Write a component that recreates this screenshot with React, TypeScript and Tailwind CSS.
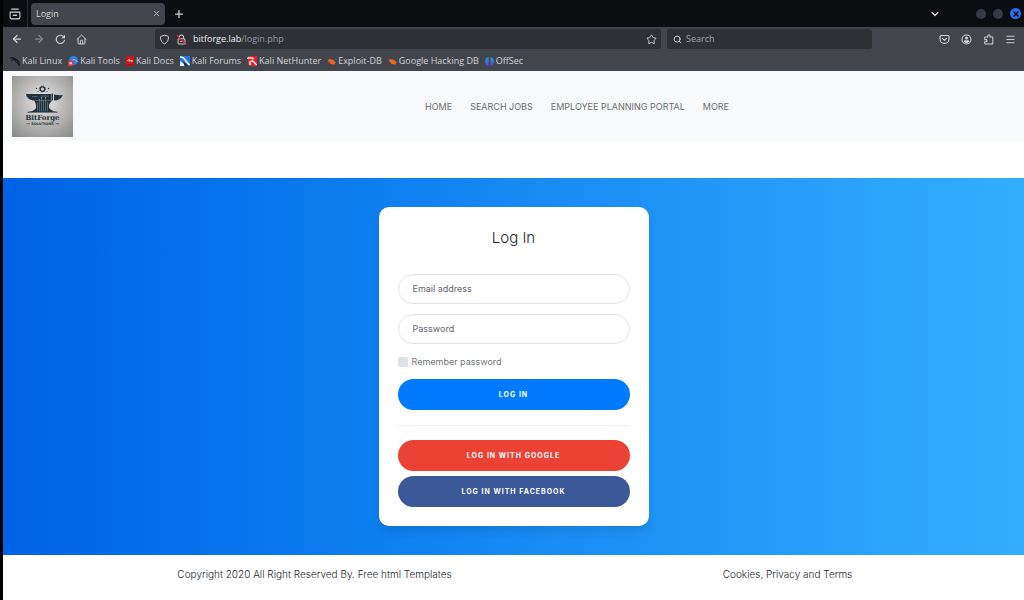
import type { ReactNode } from "react";
import { ArrowLeft, ArrowRight, ChevronDown, Menu, Plus, Search, Star, X } from "lucide-react";

function FirefoxViewIcon() {
  return (
    <svg viewBox="0 0 16 16" className="size-3" fill="none" stroke="currentColor" strokeWidth="1.4" strokeLinecap="round">
      <path d="M3.5 1.500h9" />
      <path d="M1.500 5.500h13v7a2 2 0 0 1-2 2h-9a2 2 0 0 1-2-2z" strokeLinejoin="round" />
      <path d="M6 9.700h4" strokeWidth="2" />
    </svg>
  );
}

function ReloadIcon() {
  return (
    <svg viewBox="0 0 16 16" className="size-[11px]" fill="none" stroke="currentColor" strokeWidth="1.6" strokeLinecap="round">
      <path d="M13.600 9.200A6 6 0 1 1 11.800 3.400" />
      <path d="M14.500 1v5.200H9.300z" fill="currentColor" stroke="none" />
    </svg>
  );
}

function HomeIcon() {
  return (
    <svg viewBox="0 0 16 16" className="size-[11px]" fill="none" stroke="currentColor" strokeWidth="1.4" strokeLinejoin="round" strokeLinecap="round">
      <path d="M1.300 8 8 1.500 14.700 8" />
      <path d="M3 7v6.200a1.300 1.300 0 0 0 1.300 1.300h7.400a1.300 1.300 0 0 0 1.300-1.300V7" />
      <path d="M6.300 14.300V10a1 1 0 0 1 1-1h1.400a1 1 0 0 1 1 1v4.300" />
    </svg>
  );
}

function ShieldIcon() {
  return (
    <svg viewBox="0 0 16 16" className="size-[11px]" fill="none" stroke="currentColor" strokeWidth="1.4" strokeLinejoin="round">
      <path d="M8 1.700 13 3.300c.5.2.8.6.8 1.100C13.800 9 12 12.500 8 14.500 4 12.500 2.200 9 2.200 4.400c0-.5.3-.9.8-1.100z" />
    </svg>
  );
}

function InsecureLockIcon() {
  return (
    <svg viewBox="0 0 16 16" className="size-[11px]" fill="none" stroke="#c9cacd" strokeWidth="1.5" strokeLinejoin="round">
      <path d="M5 7V4.300a3 3 0 0 1 6 0V7" />
      <rect x="3" y="7" width="10" height="7.500" rx="1.500" />
      <path d="M6 10.700h4" />
      <path d="M2 2.500 14.500 14.500" stroke="#e22850" strokeWidth="2" strokeLinecap="round" />
    </svg>
  );
}

function PocketIcon() {
  return (
    <svg viewBox="0 0 16 16" className="size-[11px]" fill="none" stroke="currentColor" strokeWidth="1.6" strokeLinejoin="round" strokeLinecap="round">
      <path d="M3 2.200h10a1.500 1.500 0 0 1 1.500 1.500v3.500a6.500 6.500 0 0 1-13 0V3.700A1.500 1.500 0 0 1 3 2.200z" />
      <path d="m5 6.500 3 2.900 3-2.900" />
    </svg>
  );
}

function AccountIcon() {
  return (
    <svg viewBox="0 0 16 16" className="size-[11px]" fill="none" stroke="currentColor" strokeWidth="1.5">
      <circle cx="8" cy="8" r="6.500" />
      <circle cx="8" cy="5.800" r="2.200" fill="currentColor" stroke="none" />
      <path d="M4 11.200c0-1.500 1-2.200 2.200-2.200h3.600c1.200 0 2.200.7 2.200 2.200-1 1.300-2.500 1.900-4 1.900s-3-.6-4-1.900z" fill="currentColor" stroke="none" />
    </svg>
  );
}

function ExtensionIcon() {
  return (
    <svg viewBox="0 0 16 16" className="size-[11px]" fill="none" stroke="currentColor" strokeWidth="1.500" strokeLinejoin="round">
      <path d="M7 4.500V2.800a1.600 1.600 0 0 1 3.200 0v1.700h3.100c.6 0 1 .4 1 1v8c0 .6-.4 1-1 1H3.500c-.6 0-1-.4-1-1v-2.300h1.900a1.500 1.500 0 0 0 0-3H2.500V5.500c0-.6.4-1 1-1z" />
    </svg>
  );
}

function KaliDragonIcon() {
  return (
    <svg viewBox="0 0 20 20" className="size-[10px]" fill="none" stroke="#17181b" strokeLinecap="round">
      <path d="M1 4c5-1 9 0 11 3M3 8c4-1 7-1 9 0" strokeWidth="2.400" />
      <path d="M8 5c2 5 9 2 10 8-2-2-4-1-3 1 1 2 3 2 4 5" strokeWidth="2.400" />
      <path d="M11 7c-3 3 1 6 4 6" strokeWidth="2" />
    </svg>
  );
}

function ToolsIcon() {
  return (
    <svg viewBox="0 0 20 20" className="size-[10px]">
      <circle cx="11" cy="9" r="9" fill="#2e7de9" />
      <path d="M9 8c4-2 7 0 10 4" fill="none" stroke="#a9cbf8" strokeWidth="2" />
      <rect x="0" y="9" width="11" height="11" rx="3" fill="#e23b3b" />
      <path d="M3 12.500h5v4H3z" fill="#f5caca" />
    </svg>
  );
}

function DocsIcon() {
  return (
    <svg viewBox="0 0 16 20" className="h-[10px] w-2">
      <rect width="16" height="20" rx="1.500" fill="#d5131b" />
      <path d="M3 10l3-3 1 4 3-3 1 3 3-2" fill="none" stroke="#fff" strokeWidth="1.800" />
      <path d="M1 17.500h14" stroke="#8f0a10" strokeWidth="1.500" />
    </svg>
  );
}

function ForumsIcon() {
  return (
    <svg viewBox="0 0 20 20" className="size-[10px]">
      <rect width="20" height="20" fill="#2277e3" />
      <path d="M0 20V10l6 4 5 6z" fill="#e9f1fc" />
      <path d="M0 2c6 0 9 3 11 7l8 9" fill="none" stroke="#fff" strokeWidth="3" />
      <path d="M6 10l10 10H9z" fill="#24272c" />
    </svg>
  );
}

function NetHunterIcon() {
  return (
    <svg viewBox="0 0 20 20" className="size-[10px]">
      <path d="M2 0h18v20H10C3 20 0 16 2 11z" fill="#e0262c" />
      <path d="M0 5c5-2 10-2 13 1M7 18c-3-4-1-8 3-8 4 0 4 3 9 8" fill="none" stroke="#fff" strokeWidth="2.600" />
    </svg>
  );
}

function ExploitIcon() {
  return (
    <svg viewBox="0 0 20 20" className="size-[9px]">
      <path d="M1 5c2 1 3 0 5 0 5-1 10 2 12 6l2 2-3 1 1 3-4-1c-4 1-8-1-9-5L1 9l3-1z" fill="#f0641a" />
    </svg>
  );
}

function OffSecIcon() {
  return (
    <svg viewBox="0 0 20 20" className="size-[9px]">
      <defs>
        <linearGradient id="offsec" x1="0" y1="0" x2="0" y2="1">
          <stop offset="0" stopColor="#17a5c4" />
          <stop offset="1" stopColor="#5a3fe0" />
        </linearGradient>
      </defs>
      <path d="M8 0v20C3 19 0 15 0 10S3 1 8 0zM12 0c5 1 8 5 8 10s-3 9-8 10z" fill="url(#offsec)" />
    </svg>
  );
}

function BitForgeLogo() {
  return (
    <svg viewBox="0 0 122 122" className="size-[61px]" role="img" aria-label="BitForge Solutions">
      <defs>
        <radialGradient id="plate" cx="0.5" cy="0.42" r="0.72">
          <stop offset="0" stopColor="#ecebe9" />
          <stop offset="0.4" stopColor="#c4c3c1" />
          <stop offset="1" stopColor="#8d8d8c" />
        </radialGradient>
      </defs>
      <rect width="122" height="122" fill="url(#plate)" />
      <circle cx="61" cy="26" r="4.500" fill="none" stroke="#22313b" strokeWidth="2.500" />
      <circle cx="61" cy="26" r="6.200" fill="none" stroke="#22313b" strokeWidth="1.600" strokeDasharray="2.500 2.400" />
      <g fill="#22313b">
        <circle cx="49" cy="25" r="1.300" />
        <circle cx="73" cy="25" r="1.300" />
        <circle cx="52" cy="31" r="1.200" />
        <circle cx="70" cy="31" r="1.200" />
        <path d="M28 36h50v13H45c-9 0-16-5-17-13z" />
        <path d="M79 35h3v14h-3zM84 37c6 1 11 2 18 1-3 7-9 11-18 11z" />
        <path d="M44 49h36c-4 5-7 8-6 13 1 5 6 8 15 10H33c9-2 15-5 15-10 0-5-1-9-4-13z" />
      </g>
      <path d="M55 48v23M59 44v27M63 48v23M67 44v27M51 52v19M40 41h11M71 52v19M58 40h16" fill="none" stroke="#8ea1a6" strokeWidth="0.900" />
      <g fill="#8ea1a6">
        <circle cx="59" cy="43" r="1.300" />
        <circle cx="67" cy="43" r="1.300" />
        <circle cx="55" cy="47" r="1.200" />
      </g>
      <path d="M31 72.500h60" stroke="#22313b" strokeWidth="1.500" />
      <text x="61" y="88" textAnchor="middle" fontFamily="DejaVu Serif, serif" fontWeight="700" fontSize="14" fill="#22313b">BitForge</text>
      <text x="61" y="98" textAnchor="middle" fontFamily="DejaVu Sans, sans-serif" fontWeight="700" fontSize="7" fill="#22313b">SOLUTIONS</text>
      <path d="M29 95.500h7M87 95.500h7" stroke="#22313b" strokeWidth="1.200" />
    </svg>
  );
}

const bookmarks: { label: string; icon: ReactNode }[] = [
  { label: "Kali Linux", icon: <KaliDragonIcon /> },
  { label: "Kali Tools", icon: <ToolsIcon /> },
  { label: "Kali Docs", icon: <DocsIcon /> },
  { label: "Kali Forums", icon: <ForumsIcon /> },
  { label: "Kali NetHunter", icon: <NetHunterIcon /> },
  { label: "Exploit-DB", icon: <ExploitIcon /> },
  { label: "Google Hacking DB", icon: <ExploitIcon /> },
  { label: "OffSec", icon: <OffSecIcon /> },
];

function BrowserChrome() {
  return (
    <div className="bg-[#42454c] font-['Open_Sans',sans-serif] text-[9px] leading-3 text-[#d2d3d6]">
      <div className="flex h-[27px] items-center bg-[#0c0d11]">
        <button type="button" aria-label="Firefox View" className="flex h-full w-[25px] items-center justify-center border-r border-[#2b2d33]">
          <FirefoxViewIcon />
        </button>
        <div className="ml-[3px] flex h-[22px] w-[134px] items-center justify-between rounded-sm bg-[#42454c] pr-1 pl-[5px]">
          <span>Login</span>
          <button type="button" aria-label="Close tab">
            <X className="size-[9px]" strokeWidth={2} />
          </button>
        </div>
        <button type="button" aria-label="New tab" className="ml-2">
          <Plus className="size-3" strokeWidth={2.500} />
        </button>
        <button type="button" aria-label="List all tabs" className="mr-[35px] ml-auto">
          <ChevronDown className="size-3" strokeWidth={2.500} />
        </button>
        <div className="flex items-center gap-[7px] pr-[3px]">
          <button type="button" aria-label="Minimize" className="size-[10px] rounded-full bg-[#363a46]" />
          <button type="button" aria-label="Maximize" className="size-[10px] rounded-full bg-[#363a46]" />
          <button type="button" aria-label="Close window" className="flex size-[11px] items-center justify-center rounded-full bg-[#2470f0] text-[#0c0d11]">
            <X className="size-2" strokeWidth={4} />
          </button>
        </div>
      </div>

      <div className="flex h-6 items-center pr-2 pl-2">
        <div className="flex w-[144px] items-center gap-[10px]">
          <button type="button" aria-label="Back"><ArrowLeft className="size-3" strokeWidth={2.500} /></button>
          <button type="button" aria-label="Forward" className="text-[#85878c]"><ArrowRight className="size-3" strokeWidth={2.500} /></button>
          <button type="button" aria-label="Reload"><ReloadIcon /></button>
          <button type="button" aria-label="Home"><HomeIcon /></button>
        </div>
        <div className="flex h-5 flex-[498] items-center rounded-[3px] bg-[#2e3035] px-1">
          <ShieldIcon />
          <span className="ml-[6px]"><InsecureLockIcon /></span>
          <span className="ml-[6px] flex-1 text-[#f1f1f3]">bitforge.lab<span className="text-[#97999e]">/login.php</span></span>
          <button type="button" aria-label="Bookmark this page"><Star className="size-[11px]" strokeWidth={2} /></button>
        </div>
        <label className="ml-[6px] flex h-5 flex-[193] items-center gap-1 rounded-[3px] bg-[#2e3035] px-[6px]">
          <Search className="size-[9px] shrink-0" strokeWidth={2.500} />
          <input aria-label="Search" placeholder="Search" className="w-full min-w-0 bg-transparent outline-none placeholder:text-[#a2a4a8]" />
        </label>
        <div className="flex w-[144px] items-center justify-end gap-[11px]">
          <button type="button" aria-label="Pocket"><PocketIcon /></button>
          <button type="button" aria-label="Account"><AccountIcon /></button>
          <button type="button" aria-label="Extensions"><ExtensionIcon /></button>
          <button type="button" aria-label="Menu"><Menu className="size-[11px]" strokeWidth={2} /></button>
        </div>
      </div>

      <div className="flex h-5 items-center gap-[6px] pl-[7px]">
        {bookmarks.map((b) => (
          <a key={b.label} href="#" className="flex items-center gap-[2px] whitespace-nowrap">
            {b.icon}
            {b.label}
          </a>
        ))}
      </div>
    </div>
  );
}

function SiteHeader() {
  return (
    <header className="flex h-[70px] items-center bg-[#f8f9fa] pr-[9px] pl-[9px]">
      <a href="#" className="shrink-0"><BitForgeLogo /></a>
      <nav className="flex flex-1 justify-center gap-[18px] pt-[2px] pl-[66px] text-[9px] leading-4 text-[#6c6d6f]">
        <a href="#">HOME</a>
        <a href="#">SEARCH JOBS</a>
        <a href="#">EMPLOYEE PLANNING PORTAL</a>
        <a href="#">MORE</a>
      </nav>
    </header>
  );
}

function LoginCard() {
  const field =
    "block h-[30px] w-full rounded-full border border-[#dfe2e6] bg-white px-[14px] pb-[2px] text-[9px] text-[#495057] outline-none placeholder:text-[#5f666d] placeholder:opacity-100";
  const button = "block h-[31px] w-full rounded-full pt-[2px] text-[7px] font-bold tracking-[1px] text-white";
  return (
    <form
      className="w-[270px] rounded-[10px] bg-white px-[19px] pt-5 pb-[19px] shadow-[0_5px_10px_rgba(0,0,0,0.1)]"
      onSubmit={(e) => e.preventDefault()}
    >
      <h1 className="mb-[25px] text-center text-[15px] leading-[22px] font-light text-[#212529]">Log In</h1>
      <div className="space-y-[10px]">
        <input type="email" aria-label="Email address" placeholder="Email address" className={field} />
        <input type="password" aria-label="Password" placeholder="Password" className={field} />
      </div>
      <label className="mt-[11px] mb-[10px] flex h-[14px] items-center gap-1 text-[9px] text-[#74777a]">
        <input type="checkbox" className="size-[10px] appearance-none rounded-[2px] bg-[#dee2e6] checked:bg-[#007bff]" />
        Remember password
      </label>
      <button type="submit" className={`${button} bg-[#007bff]`}>LOG IN</button>
      <hr className="mt-[15px] mb-[14px] border-[#eeeff0]" />
      <div className="space-y-[5px]">
        <button type="button" className={`${button} bg-[#ea4335]`}>LOG IN WITH GOOGLE</button>
        <button type="button" className={`${button} bg-[#3b5998]`}>LOG IN WITH FACEBOOK</button>
      </div>
    </form>
  );
}

export default function App() {
  return (
    <div className="min-h-screen border-l-[3px] border-black bg-white">
      <BrowserChrome />
      <div className="font-[Inter,sans-serif]">
        <SiteHeader />
        <main className="mt-[37px] flex justify-center bg-linear-to-r from-[#0062e6] to-[#33aeff] pt-[29px] pb-[29px]">
          <LoginCard />
        </main>
        <footer className="grid grid-cols-2 pt-[11px] pb-3 pl-[75px] text-center text-[10px] leading-4 font-light text-[#212529]">
          <p>Copyright 2020 All Right Reserved By. <a href="#">Free html Templates</a></p>
          <p>Cookies, Privacy and Terms</p>
        </footer>
      </div>
    </div>
  );
}
